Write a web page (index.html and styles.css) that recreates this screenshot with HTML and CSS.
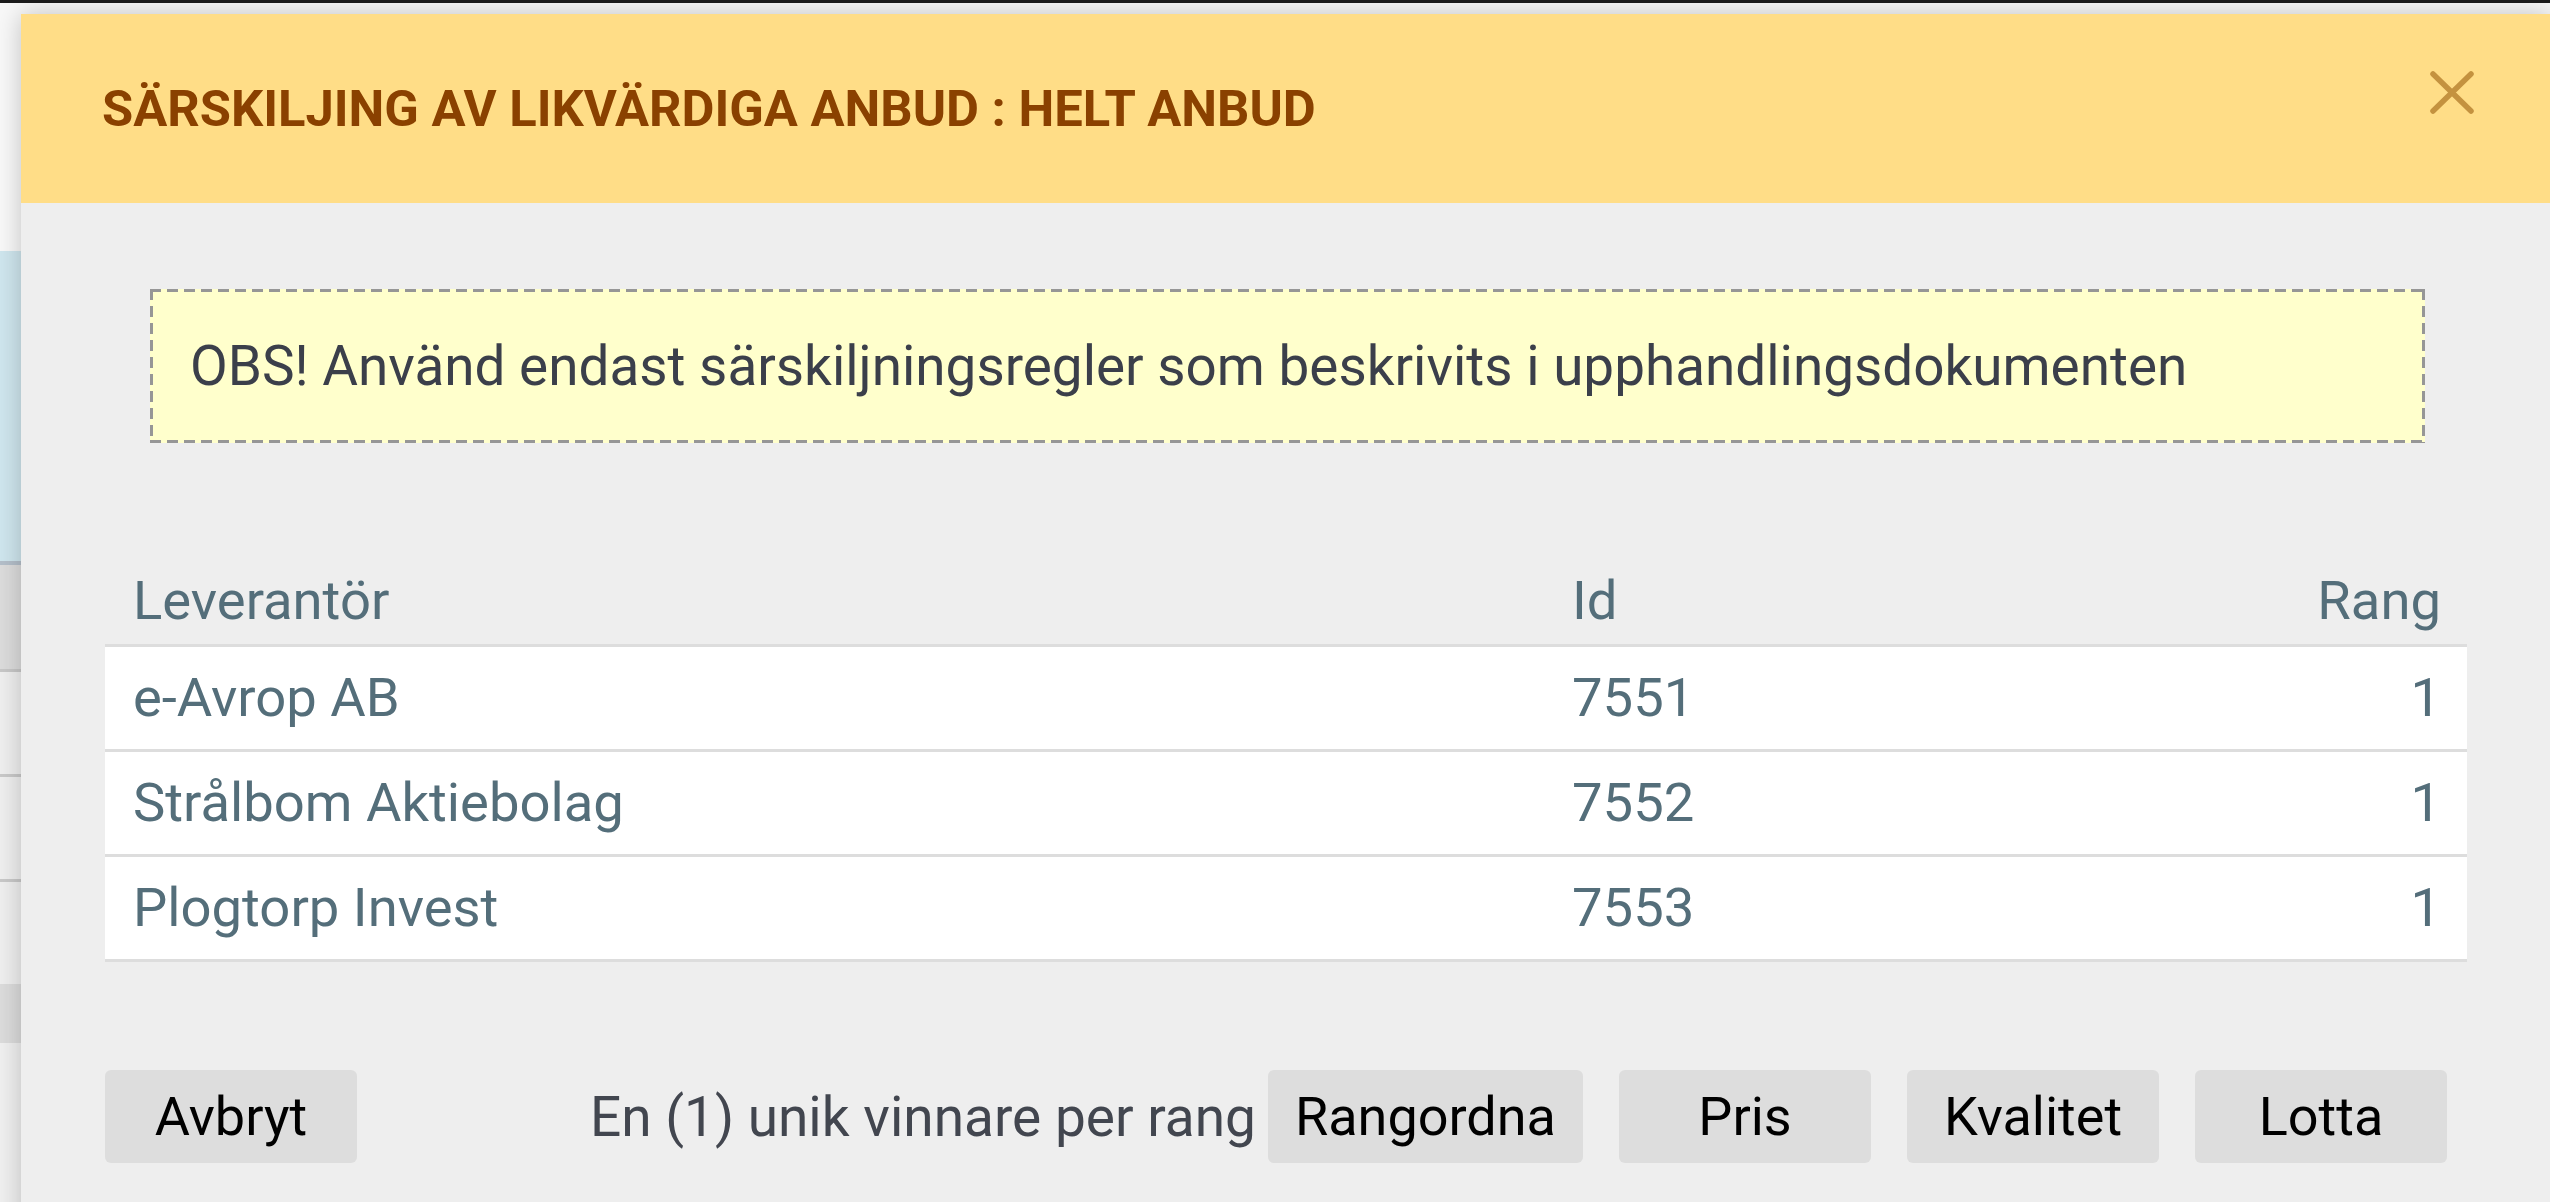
FILE: index.html
```html
<!DOCTYPE html>
<html lang="sv">
<head>
<meta charset="utf-8">
<title>Särskiljing av likvärdiga anbud</title>
<link rel="stylesheet" href="styles.css">
</head>
<body>
<div class="page" aria-hidden="true">
  <div class="topbar"></div>
  <div class="bg-top"></div>
  <div class="bg-blue"></div>
  <div class="bg-gray"></div>
  <div class="bg-row bg-row--line"></div>
  <div class="bg-row bg-row--line"></div>
  <div class="bg-row"></div>
  <div class="bg-gray2"></div>
  <div class="bg-rest"></div>
</div>

<div class="dialog" role="dialog" aria-labelledby="dlg-title">
  <header class="dlg-head">
    <h1 class="dlg-title" id="dlg-title">SÄRSKILJING AV LIKVÄRDIGA ANBUD : HELT ANBUD</h1>
    <button class="close" type="button" aria-label="Stäng">
      <svg width="44" height="43" viewBox="0 0 44 43"><path d="M3 3 L41 40 M41 3 L3 40" fill="none" stroke="#c4923f" stroke-width="5.5" stroke-linecap="round"/></svg>
    </button>
  </header>
  <div class="dlg-body">
    <div class="notice">OBS! Använd endast särskiljningsregler som beskrivits i upphandlingsdokumenten</div>
    <table class="grid">
      <thead>
        <tr><th class="c-name">Leverantör</th><th class="c-id">Id</th><th class="c-rank">Rang</th></tr>
      </thead>
      <tbody>
        <tr><td class="c-name">e-Avrop AB</td><td class="c-id">7551</td><td class="c-rank">1</td></tr>
        <tr><td class="c-name">Strålbom Aktiebolag</td><td class="c-id">7552</td><td class="c-rank">1</td></tr>
        <tr><td class="c-name">Plogtorp Invest</td><td class="c-id">7553</td><td class="c-rank">1</td></tr>
      </tbody>
    </table>
    <div class="actions">
      <button class="btn" type="button">Avbryt</button>
      <span class="hint">En (1) unik vinnare per rang</span>
      <div class="btn-group">
        <button class="btn" type="button">Rangordna</button>
        <button class="btn" type="button">Pris</button>
        <button class="btn" type="button">Kvalitet</button>
        <button class="btn" type="button">Lotta</button>
      </div>
    </div>
  </div>
</div>
</body>
</html>
```

FILE: styles.css
```css
html, body {
  margin: 0;
  padding: 0;
  height: 100%;
}
body {
  position: relative;
  overflow: hidden;
  font-family: Roboto, "Noto Sans", "Liberation Sans", sans-serif;
  background: #f0f0f0;
}

/* background page (behind the dialog) */
.page {
  display: flex;
  flex-direction: column;
  height: 1202px;
}
.topbar { height: 3px; background: #1c1c1c; flex: none; }
.bg-top { height: 248px; background: #f8f8f8; flex: none; }
.bg-blue { height: 310px; background: #cfe6ee; border-bottom: 4px solid #b4bfca; flex: none; }
.bg-gray { height: 104px; background: #dcdcdc; border-bottom: 3px solid #c8c8c8; flex: none; }
.bg-row { height: 102px; background: #efefef; flex: none; }
.bg-row--line { border-bottom: 3px solid #c9c9c9; }
.bg-row:last-of-type { height: 100px; }
.bg-gray2 { height: 59px; background: #dcdcdc; flex: none; }
.bg-rest { flex: 1; background: #f0f0f0; }

/* dialog overlay */
.dialog {
  position: absolute;
  left: 21px;
  top: 14px;
  width: 2530px;
  bottom: -40px;
  background: #eeeeee;
  box-shadow: 0 0 24px rgba(0, 0, 0, 0.22);
  display: flex;
  flex-direction: column;
}

.dlg-head {
  height: 189px;
  flex: none;
  background: #ffdd87;
  display: flex;
  align-items: center;
  padding: 0 77px 0 81px;
}
.dlg-title {
  flex: 1;
  margin: 0;
  font-size: 50.7px;
  font-weight: 700;
  color: #8a4100;
  line-height: 64px;
}
.close {
  align-self: flex-start;
  margin-top: 57px;
  padding: 0;
  border: 0;
  background: none;
  width: 44px;
  height: 43px;
  display: block;
}
.close svg { display: block; }

.dlg-body {
  padding: 86px 84px 0;
}

.notice {
  margin: 0 42px 0 45px;
  padding: 45px 40px;
  background:
    linear-gradient(90deg, #969696 11px, transparent 11px) left top / 17px 3px repeat-x,
    linear-gradient(90deg, #969696 11px, transparent 11px) left bottom / 17px 3px repeat-x,
    linear-gradient(180deg, #969696 11px, transparent 11px) left top / 3px 17px repeat-y,
    linear-gradient(180deg, #969696 11px, transparent 11px) right top / 3px 17px repeat-y,
    #ffffcc;
  color: #3b3f4a;
  font-size: 54.85px;
  line-height: 64px;
}

.grid {
  width: 100%;
  margin-top: 97px;
  border-collapse: collapse;
  table-layout: fixed;
  color: #546e7a;
  font-size: 54.4px;
  line-height: 64px;
}
.grid th {
  font-weight: 400;
  text-align: left;
  padding: 29px 28px 11px;
  border-bottom: 3px solid #dddddd;
}
.grid td {
  background: #ffffff;
  padding: 19px 28px;
  border-bottom: 3px solid #dddddd;
}
.grid .c-name { width: 1383px; }
.grid .c-rank { text-align: right; padding-right: 26px; }

.actions {
  margin-top: 108px;
  margin-right: 20px;
  display: flex;
  align-items: center;
}
.hint {
  margin-left: auto;
  margin-right: 12px;
  color: #42464f;
  font-size: 55px;
  line-height: 64px;
}
.btn-group {
  display: flex;
  gap: 36px;
}
.btn {
  min-width: 252px;
  height: 93px;
  padding: 0 27px;
  border: 0;
  border-radius: 6px;
  background: #dddddd;
  color: #000000;
  font-family: Roboto, "Noto Sans", "Liberation Sans", sans-serif;
  font-size: 54px;
  line-height: 64px;
}
```
